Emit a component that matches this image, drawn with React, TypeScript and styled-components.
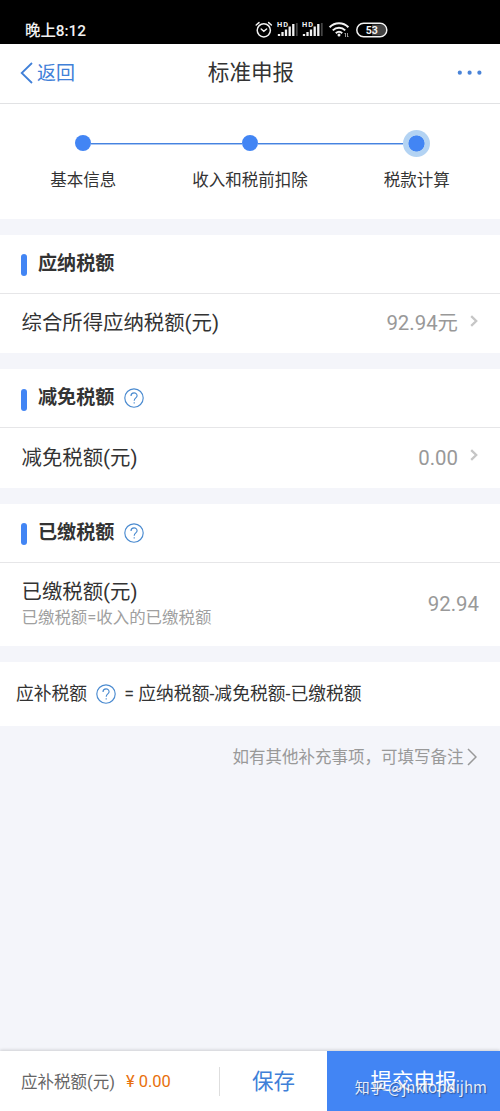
import React from "react";
import styled, { createGlobalStyle } from "styled-components";

const Global = createGlobalStyle`
  * { box-sizing: border-box; }
  body { margin: 0; background: #f4f5fa; }
`;

const Page = styled.div`
  width: 500px;
  height: 1111px;
  display: flex;
  flex-direction: column;
  overflow: hidden;
  background: #f4f5fa;
  color: #333;
  font-family: Roboto, "Noto Sans CJK SC", sans-serif;
  white-space: nowrap;
`;

const StatusBar = styled.div`
  height: 44px;
  flex: none;
  padding: 16px 0 0 25px;
  display: flex;
  background: #000;
  color: #f2f2f2;
`;

const Clock = styled.div`
  width: 229px;
  padding-top: 1px;
  font-size: 15.4px;
  font-weight: 500;
  line-height: 28px;
`;

const Header = styled.header`
  height: 60px;
  flex: none;
  display: grid;
  grid-template-columns: 120px 1fr 120px;
  align-items: center;
  padding: 0 18px 2px 20px;
  background: #fff;
  border-bottom: 1.5px solid #e1e2e4;
`;

const Back = styled.div`
  display: flex;
  align-items: center;
  gap: 4px;
  color: #4080d8;
  font-size: 19px;
  line-height: 28px;
`;

const BackLabel = styled.span`
  padding-top: 2px;
`;

const Title = styled.h1`
  margin: 0;
  font-size: 21.6px;
  font-weight: 400;
  line-height: 30px;
  text-align: center;
`;

const More = styled.div`
  display: flex;
  justify-content: flex-end;
`;

const Steps = styled.section`
  height: 114.5px;
  flex: none;
  display: grid;
  grid-template-columns: repeat(3, 1fr);
  padding-top: 25px;
  background: #fff;
`;

const Step = styled.div`
  display: flex;
  flex-direction: column;
  align-items: center;
  font-size: 16.5px;
  line-height: 24px;
`;

const Track = styled.div<{ $before?: boolean; $after?: boolean }>`
  width: 100%;
  height: 28px;
  margin-bottom: 12px;
  display: grid;
  grid-template-columns: 1fr auto 1fr;
  align-items: center;
  &::before, &::after {
    content: "";
    height: 2px;
    margin-top: 1px;
  }
  &::before { background: ${(p) => (p.$before ? "linear-gradient(#4683e0 50%, #a9c6f2 50%)" : "transparent")}; }
  &::after { background: ${(p) => (p.$after ? "linear-gradient(#4683e0 50%, #a9c6f2 50%)" : "transparent")}; }
`;

const StepDot = styled.div<{ $active?: boolean }>`
  width: ${(p) => (p.$active ? 27 : 16)}px;
  height: ${(p) => (p.$active ? 27 : 16)}px;
  border-radius: 50%;
  background: ${(p) =>
    p.$active ? "radial-gradient(circle, #4285f4 7.7px, #b3d3f3 8.3px)" : "#4285f4"};
`;

const Card = styled.section<{ $height: number }>`
  height: ${(p) => p.$height}px;
  flex: none;
  margin-top: 16px;
  display: flex;
  flex-direction: column;
  background: #fff;
`;

const CardHead = styled.div`
  height: 59px;
  flex: none;
  display: flex;
  align-items: center;
  padding-left: 21px;
  border-bottom: 1px solid #e6e6e8;
`;

const Marker = styled.i`
  width: 6px;
  height: 22px;
  margin: 3px 11px 0 0;
  border-radius: 3px;
  background: #4285f4;
`;

const CardTitle = styled.h2`
  margin: 0 10px 0 0;
  font-size: 19.1px;
  font-weight: 700;
  line-height: 28px;
`;

const Row = styled.div`
  flex: 1;
  display: flex;
  align-items: center;
  padding: 0 21px 0 21.5px;
`;

const RowText = styled.div`
  flex: 1;
`;

const RowLabel = styled.div`
  font-size: 20.4px;
  line-height: 28px;
`;

const RowHint = styled.div`
  color: #a0a0a0;
  font-size: 16.45px;
  line-height: 24px;
`;

const Value = styled.div`
  color: #999;
  font-size: 20.4px;
  line-height: 28px;
`;

const RowArrow = styled.svg`
  margin: 0 1px 5px 12px;
`;

const Formula = styled.section`
  height: 64.5px;
  flex: none;
  margin-top: 16px;
  padding-left: 16px;
  display: flex;
  align-items: center;
  gap: 8.5px;
  background: #fff;
  font-size: 17.8px;
  line-height: 26px;
`;

const Note = styled.div`
  flex: 1;
  display: flex;
  align-items: flex-start;
  justify-content: flex-end;
  gap: 3.5px;
  padding: 20px 23px 0 0;
  color: #999;
  font-size: 16.5px;
  line-height: 24px;
`;

const NoteArrow = styled.svg`
  margin-top: 2px;
`;

const Footer = styled.footer`
  position: relative;
  height: 60px;
  flex: none;
  display: flex;
  background: #fff;
  box-shadow: 0 -1px 3px rgba(0, 0, 0, 0.16);
`;

const Due = styled.div`
  width: 220px;
  margin: 16px 0 15px;
  padding: 0 0 2px 21px;
  display: flex;
  align-items: center;
  border-right: 1.5px solid #dedede;
  color: #666;
  font-size: 16.5px;
`;

const Amount = styled.span`
  margin: 2px 0 0 11px;
  color: #e8700c;
`;

const FooterButton = styled.button<{ $primary?: boolean }>`
  width: ${(p) => (p.$primary ? 173 : 107)}px;
  padding: 0 0 3px;
  border: 0;
  background: ${(p) => (p.$primary ? "#4285f4" : "#fff")};
  color: ${(p) => (p.$primary ? "#fff" : "#4080d8")};
  font: inherit;
  font-size: 21.5px;
`;

const Watermark = styled.div`
  position: absolute;
  right: 13px;
  bottom: 12px;
  color: rgba(255, 255, 255, 0.88);
  font-family: "Noto Sans CJK SC", sans-serif;
  font-size: 15px;
  line-height: 24px;
  text-shadow: 1px 1px 1px rgba(40, 60, 100, 0.6);
`;

const Help = () => (
  <svg width="20" height="20" viewBox="0 0 20 20" fill="none" stroke="#4b8bd0" strokeWidth="1.15">
    <circle cx="10" cy="10" r="9.2" />
    <path d="M7 8C7 3.9 13.1 3.9 13.1 7.8C13.1 10 10.2 9.8 10.2 12.7" />
    <path d="M10.2 14.2V15.6" />
  </svg>
);

const Arrow = () => (
  <RowArrow width="8" height="12" viewBox="0 0 8 12" fill="none" stroke="#c6c6c6" strokeWidth="2.3">
    <path d="M1.2 1.2L6.2 6L1.2 10.8" />
  </RowArrow>
);

const Signal = ({ x }: { x: number }) => (
  <g transform={`translate(${x} 0)`}>
    <text x="-1" y="11.3" fontSize="7.4" fontWeight="700" fontFamily="Roboto" textLength="11">HD</text>
    <path d="M1 18v2M4.5 16v4M8 13.5V20M11.7 10.5V20M15.3 8V20" stroke="#f2f2f2" strokeWidth="2.3" />
    <path d="M18.8 7V20" stroke="#444" strokeWidth="1.8" />
  </g>
);

const StatusIcons = () => (
  <svg width="140" height="28" viewBox="0 0 140 28" fill="#f2f2f2">
    <g fill="none" stroke="#f2f2f2" strokeWidth="1.5" strokeLinecap="round">
      <circle cx="9.8" cy="14.3" r="6.6" />
      <path d="M2.2 9L5 6.6M14.6 6.6L17.4 9M7.2 13L9.8 15.3L12.6 13" />
    </g>
    <Signal x={24} />
    <Signal x={49} />
    <g fill="none" stroke="#f2f2f2" strokeWidth="2">
      <path d="M75.6 11.2C80.8 5.9 89.2 5.9 94.4 11.2M78.8 14.4C82.3 10.9 87.7 10.9 91.2 14.4M81.8 17.3C83.7 15.5 86.3 15.5 88.2 17.3" />
    </g>
    <circle cx="85" cy="19" r="1.5" />
    <path d="M91.5 17v4M90.5 18l1-1M93.5 17v4M94.5 20l-1 1" stroke="#bbb" strokeWidth=".8" />
    <path d="M118 8.5h8.5a5.2 5.2 0 0 1 0 11H118z" fill="#444" />
    <rect x="102.8" y="7.2" width="30" height="13.6" rx="6.8" fill="none" stroke="#f2f2f2" strokeWidth="1.5" />
    <text x="117.8" y="17.8" textAnchor="middle" fontSize="10.6" fontWeight="700" fontFamily="Roboto">53</text>
  </svg>
);

export default function App() {
  return (
    <Page>
      <Global />
      <StatusBar>
        <Clock>晚上8:12</Clock>
        <StatusIcons />
      </StatusBar>
      <Header>
        <Back>
          <svg width="13" height="22" viewBox="0 0 13 22" fill="none" stroke="#4080d8" strokeWidth="1.8">
            <path d="M12 1L1.7 11L12 21" />
          </svg>
          <BackLabel>返回</BackLabel>
        </Back>
        <Title>标准申报</Title>
        <More>
          <svg width="25" height="6" viewBox="0 0 25 6" fill="#4a84d8">
            <circle cx="2.8" cy="2.7" r="2.1" />
            <circle cx="12.6" cy="2.7" r="2.1" />
            <circle cx="22.4" cy="2.7" r="2.1" />
          </svg>
        </More>
      </Header>
      <Steps>
        <Step><Track $after><StepDot /></Track>基本信息</Step>
        <Step><Track $before $after><StepDot /></Track>收入和税前扣除</Step>
        <Step><Track $before><StepDot $active /></Track>税款计算</Step>
      </Steps>
      <Card $height={118.5}>
        <CardHead><Marker /><CardTitle>应纳税额</CardTitle></CardHead>
        <Row>
          <RowText><RowLabel>综合所得应纳税额(元)</RowLabel></RowText>
          <Value>92.94元</Value>
          <Arrow />
        </Row>
      </Card>
      <Card $height={118.5}>
        <CardHead><Marker /><CardTitle>减免税额</CardTitle><Help /></CardHead>
        <Row>
          <RowText><RowLabel>减免税额(元)</RowLabel></RowText>
          <Value>0.00</Value>
          <Arrow />
        </Row>
      </Card>
      <Card $height={142}>
        <CardHead><Marker /><CardTitle>已缴税额</CardTitle><Help /></CardHead>
        <Row>
          <RowText>
            <RowLabel>已缴税额(元)</RowLabel>
            <RowHint>已缴税额=收入的已缴税额</RowHint>
          </RowText>
          <Value>92.94</Value>
        </Row>
      </Card>
      <Formula>
        <span>应补税额</span>
        <Help />
        <span>= 应纳税额-减免税额-已缴税额</span>
      </Formula>
      <Note>
        如有其他补充事项，可填写备注
        <NoteArrow width="10" height="18" viewBox="0 0 10 18" fill="none" stroke="#999" strokeWidth="1.5">
          <path d="M1 1L9 9L1 17" />
        </NoteArrow>
      </Note>
      <Footer>
        <Due>应补税额(元)<Amount>¥ 0.00</Amount></Due>
        <FooterButton>保存</FooterButton>
        <FooterButton $primary>提交申报</FooterButton>
        <Watermark>知乎 @jnklopdijhm</Watermark>
      </Footer>
    </Page>
  );
}
